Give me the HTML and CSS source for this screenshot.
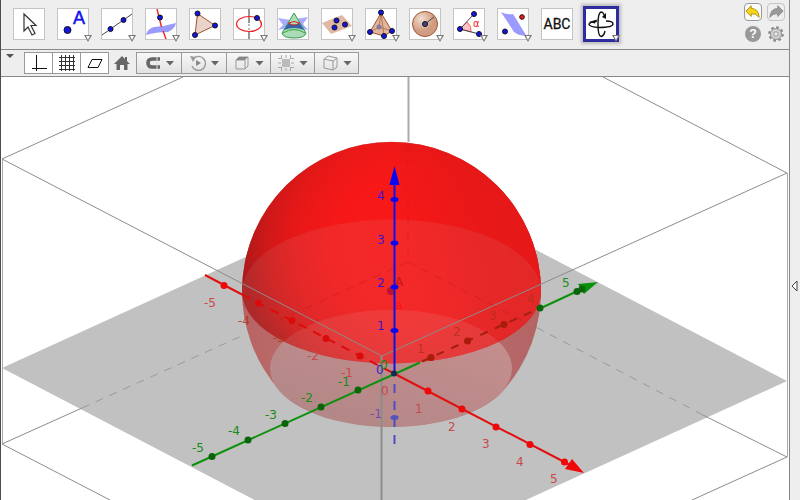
FILE: index.html
```html
<!DOCTYPE html>
<html lang="en">
<head>
<meta charset="utf-8">
<title>3D Graphics</title>
<link rel="stylesheet" href="styles.css">
</head>
<body>
<main class="app">
<header class="toolbar">
<div class="tools">
<button class="tool" aria-label="Move"><svg viewBox="0 0 30 30"><path d="M10 5v17l4-4 4 8 3-1.500-4-8h5z" fill="#fff" stroke="#333" stroke-width="1.200"/></svg></button>
<button class="tool more" aria-label="Point"><svg viewBox="0 0 30 30"><circle class="pt" cx="9.500" cy="21" r="3.500"/><text x="15" y="15" class="letter">A</text></svg></button>
<button class="tool more" aria-label="Line"><svg viewBox="0 0 30 30"><path d="M0 26L30 5" stroke="#444"/><circle class="pt" cx="8.500" cy="20" r="2.500"/><circle class="pt" cx="21.500" cy="11" r="2.500"/></svg></button>
<button class="tool more" aria-label="Perpendicular Line"><svg viewBox="0 0 30 30"><path d="M0 26Q1 20 8 18Q20 17 30 14Q29 20 22 23Q10 23 0 26z" fill="#9b9bff"/><path d="M11 0L15.500 18M17 22L20 30" stroke="#e22" stroke-width="1.400"/><circle class="pt" cx="14" cy="8.500" r="2.500"/></svg></button>
<button class="tool" aria-label="Polygon"><svg viewBox="0 0 30 30"><path d="M7.500 4.500L25 16.500L5 26z" fill="#ead3c9" stroke="#a0522d"/><circle class="pt" cx="7.500" cy="4.500" r="2.500"/><circle class="pt" cx="25" cy="16.500" r="2.500"/><circle class="pt" cx="5" cy="26" r="2.500"/></svg></button>
<button class="tool more" aria-label="Circle with Axis"><svg viewBox="0 0 30 30"><path d="M15 0V14M15 23V30" stroke="#777" stroke-width="1.500"/><path d="M15 15V22" stroke="#777" stroke-dasharray="2 2"/><ellipse cx="15" cy="15" rx="12.500" ry="7.500" fill="none" stroke="#e22" stroke-width="1.200"/><circle class="pt" cx="23" cy="9" r="2.500"/></svg></button>
<button class="tool" aria-label="Intersect Two Surfaces"><svg viewBox="0 0 30 30"><path d="M0 9L12 11L30 8L25 15L30 21L14 18L0 21L5 16z" fill="#a9a9ff"/><path d="M16 4L4 24Q5 29 16 29Q27 29 28 24z" fill="#acdcb5" stroke="#359a55"/><path d="M10.500 14Q16 18 21.500 14L26 21Q16 17 6 21z" fill="#3563a5"/><path d="M10.500 14Q16 18 21.500 14Q16 11 10.500 14" fill="none" stroke="#d22"/><path d="M5 24Q16 17 27 24" fill="none" stroke="#35a53e"/></svg></button>
<button class="tool more" aria-label="Plane through 3 Points"><svg viewBox="0 0 30 30"><path d="M0 14L20 6L30 17L9 25z" fill="#deb9a6"/><circle class="pt" cx="14.500" cy="11.500" r="2.500"/><circle class="pt" cx="23" cy="15.500" r="2.500"/><circle class="pt" cx="12.500" cy="18.500" r="2.500"/></svg></button>
<button class="tool more" aria-label="Pyramid"><svg viewBox="0 0 30 30"><path d="M15 4L4 23L18 27L26 22z" fill="#e0b49d" stroke="#a0522d"/><path d="M15 4L18 27M15 4L13 18L4 23M13 18L26 22" fill="none" stroke="#b77550"/><circle cx="13" cy="18" r="2.500" fill="#8179a0"/><circle class="pt" cx="15" cy="3.500" r="2.500"/><circle class="pt" cx="4" cy="23" r="2.500"/><circle class="pt" cx="18" cy="27" r="2.500"/><circle class="pt" cx="26" cy="22" r="2.500"/></svg></button>
<button class="tool more" aria-label="Sphere"><svg viewBox="0 0 30 30"><circle cx="15" cy="15" r="12.500" fill="url(#ball)" stroke="#9b5636"/><path d="M15 15L24 8" stroke="#444"/><circle cx="15" cy="15" r="2.500" fill="#454677" stroke="#112"/></svg></button>
<button class="tool more" aria-label="Angle"><svg viewBox="0 0 30 30"><path d="M6 20L13 13Q18 17 17 23z" fill="#ffc3c3" stroke="#e66"/><path d="M20 5L6 20L25 25" fill="none" stroke="#444"/><circle class="pt" cx="20" cy="5" r="2.500"/><circle class="pt" cx="6" cy="20" r="2.500"/><circle class="pt" cx="25" cy="25" r="2.500"/><text x="19" y="18" class="alpha">α</text></svg></button>
<button class="tool more" aria-label="Reflect about Plane"><svg viewBox="0 0 30 30"><path d="M3 3Q9 6 15 5L28 26Q23 28 16 23z" fill="#9b9bff"/><circle cx="24" cy="8" r="2.300" fill="#d22" stroke="#300"/><circle class="pt" cx="7" cy="22.500" r="2.500"/></svg></button>
<button class="tool" aria-label="Text"><svg viewBox="0 0 30 30"><text x="15" y="20" class="abc">ABC</text></svg></button>
<button class="tool more selected" aria-label="Rotate 3D Graphics View"><svg viewBox="0 0 30 30"><g fill="none" stroke="#111" stroke-width="1.400"><path d="M11 12Q3 13 3 15.500Q4 18 13 18.500Q27 18.500 27 15Q27 12 20 12"/><path d="M19 9Q18 3 15 3Q12 4 12 15Q12 27 15 27.500Q18 27 19 22"/></g><path d="M3 13L11 10.500L9 14.500zM16 8L20 4L20 10z" fill="#111"/></svg></button>
</div>
<div class="actions">
<button class="action round" aria-label="Undo"><svg viewBox="0 0 18 18"><path d="M1 8L7 2V5Q15 5 16 15Q12 10 7 11V14z" fill="#f5d51b" stroke="#ae8800"/></svg></button>
<button class="action round dim" aria-label="Redo"><svg viewBox="0 0 18 18"><path d="M17 8L11 2V5Q3 5 2 15Q6 10 11 11V14z" fill="#999" stroke="#888"/></svg></button>
<button class="action" aria-label="Help"><svg viewBox="0 0 18 18"><circle cx="9" cy="9" r="9" fill="#999"/><text x="9" y="14" class="help">?</text></svg></button>
<button class="action" aria-label="Settings"><svg viewBox="0 0 18 18"><circle cx="9" cy="9" r="7.500" fill="none" stroke="#888" stroke-width="2.500" stroke-dasharray="2.950 2.940"/><circle cx="9" cy="9" r="4.500" fill="none" stroke="#d0d0d0" stroke-width="3.500"/><circle cx="9" cy="9" r="6.200" fill="none" stroke="#888"/><circle cx="9" cy="9" r="2.500" fill="#eee" stroke="#888"/></svg></button>
</div>
</header>
<nav class="stylebar">
<button class="toggle" aria-label="Toggle style bar"><svg viewBox="0 0 10 6"><path d="M1 1H9L5 5z" fill="#555"/></svg></button>
<div class="group">
<button class="opt white" aria-label="Axes"><svg viewBox="0 0 18 18"><path d="M6.500 1V17M2 14.500H17" class="ink"/></svg></button>
<button class="opt white" aria-label="Grid"><svg viewBox="0 0 18 18"><path d="M3.500 1V17M7.500 1V17M11.500 1V17M15.500 1V17M1 3.500H17M1 7.500H17M1 11.500H17M1 15.500H17" stroke="#333"/></svg></button>
<button class="opt white" aria-label="Plane"><svg viewBox="0 0 18 18"><path d="M6 5.500H16L12 13.500H2z" class="ink"/></svg></button>
</div>
<button class="home" aria-label="Standard View"><svg viewBox="0 0 18 18"><path d="M9 2L1 10H3.500V16H7V11H11V16H14.500V10H17L14 7V3H12V5z" fill="#666"/></svg></button>
<div class="group">
<button class="opt drop" aria-label="Point Capturing"><svg viewBox="0 0 18 18"><path d="M16 5H8Q4 5 4 9T8 13H16" fill="none" stroke="#666" stroke-width="3.600"/><path d="M13 3V15" stroke="#ddd"/></svg></button>
<button class="opt drop" aria-label="Start rotating"><svg viewBox="0 0 18 18"><path d="M4 5A7 7 0 1 1 3 12" fill="none" stroke="#999" stroke-width="1.400"/><path d="M1 2L7 3L4 8z" fill="#999"/><path d="M7 6L12 9L7 12z" fill="#888"/></svg></button>
<button class="opt drop" aria-label="View direction"><svg viewBox="0 0 18 18"><path d="M3 6L6 3H15V12L12 15" class="cube"/><path d="M3 6H12V15H3z" class="cube"/><path d="M3 6L6 3H15L12 6z" fill="#888"/></svg></button>
<button class="opt drop" aria-label="Clipping"><svg viewBox="0 0 18 18"><path d="M5 5H13V13H5z" fill="#bbb"/><path d="M4.500 1V5M9 1V4M13.500 1V5M4.500 13V17M9 14V17M13.500 13V17M1 4.500H5M1 9H4M1 13.500H5M13 4.500H17M14 9H17M13 13.500H17" stroke="#aaa"/></svg></button>
<button class="opt drop" aria-label="Projection"><svg viewBox="0 0 18 18"><path d="M3 5L12 7V16L3 14zM3 5L7 2L16 4L12 7M16 4V13L12 16" class="cube"/></svg></button>
</div>
</nav>
<section class="view">
<svg viewBox="1 77 788 423" preserveAspectRatio="xMidYMin slice" role="img" aria-label="Sphere with coordinate axes">
<defs>
<radialGradient id="dome" gradientUnits="userSpaceOnUse" cx="415" cy="245" r="176">
<stop offset="0" stop-color="#fa1818"/><stop offset=".45" stop-color="#f61818"/><stop offset=".68" stop-color="#e81818"/><stop offset=".84" stop-color="#d01818"/><stop offset="1" stop-color="#a81a1a"/>
</radialGradient>
<linearGradient id="side" gradientUnits="userSpaceOnUse" x1="400" y1="250" x2="500" y2="215"><stop offset="0" stop-color="#e41818" stop-opacity="0"/><stop offset="1" stop-color="#e61818"/></linearGradient>
<linearGradient id="under"><stop offset="0" stop-color="#b96464"/><stop offset=".5" stop-color="#be7474"/><stop offset="1" stop-color="#b36464"/></linearGradient>
<linearGradient id="base" x1="0" y1="1" x2=".7" y2="0"><stop offset="0" stop-color="#b08686"/><stop offset="1" stop-color="#c68e8e"/></linearGradient>
<radialGradient id="ball" cx=".35" cy=".3"><stop offset="0" stop-color="#f2ddd1"/><stop offset="1" stop-color="#d09b80"/></radialGradient>
<clipPath id="domeclip"><path d="M242 291.500A149.500 149.500 0 0 1 541 291.500A149.500 72 0 0 1 242 291.500z"/></clipPath>
</defs>
<path d="M2 368L408 183L787 381L381 566z" fill="#c1c1c1"/>
<path d="M281 392A149.500 149.500 0 1 1 502 392A121 58.500 0 0 1 281 392z" fill="url(#under)"/>
<ellipse cx="391" cy="368.500" rx="121" ry="58.500" fill="url(#base)"/>
<g clip-path="url(#domeclip)">
<path d="M240 140H543V366H240z" fill="url(#dome)"/>
<path d="M400 140H543V366H400z" fill="url(#side)"/>
<ellipse cx="391.500" cy="291.500" rx="149.500" ry="72" fill="#cfcfcf" fill-opacity=".09"/>
<ellipse cx="391" cy="368.500" rx="121" ry="58.500" fill="#ddd" fill-opacity=".1"/>
<path d="M408 142V262L541 330M408 262L242 337" class="inner"/>
</g>
<path d="M82 408L246 334M703 415L530 324" class="edge hidden"/>
<path d="M2.500 159V444M787.500 173V457" class="edge pale"/>
<path d="M408.500 77V142" class="edge pale wide"/>
<path d="M183 77L2 159L382 356L787 173L603 77M82 408L2 444L110 500M703 415L787 457L692 500" class="edge"/>
<path d="M381.500 356V500" class="edge wide"/>
<g class="red">
<path d="M205 275L242 294.500M394 373.500L572 466"/>
<path d="M242 294.500L394 373.500" class="dash"/>
<path d="M584 473L565 469L572 459z" class="solid"/>
<g class="solid"><circle cx="224" cy="285.500" r="3.500"/><circle cx="428" cy="391" r="3.500"/><circle cx="462" cy="409" r="3.500"/><circle cx="496" cy="427" r="3.500"/><circle cx="530" cy="444.500" r="3.500"/><circle cx="564.500" cy="462" r="3.500"/></g>
<g class="behind"><circle cx="258.500" cy="303" r="3.500"/><circle cx="292" cy="320.500" r="3.500"/><circle cx="326" cy="338.500" r="3.500"/><circle cx="360" cy="356" r="3.500"/></g>
</g>
<g class="green">
<path d="M192 465.500L420 362.500M540 308.500L582 289"/>
<path d="M422 361.500L540 308" class="dash"/>
<path d="M598 282L578 284L584 294z" class="head"/>
<g class="solid"><circle cx="212" cy="456.500" r="3.500"/><circle cx="248" cy="440" r="3.500"/><circle cx="285" cy="423.500" r="3.500"/><circle cx="321" cy="407" r="3.500"/><circle cx="358" cy="390" r="3.500"/><circle cx="540" cy="308" r="3.500"/><circle cx="577" cy="291.500" r="3.500"/><circle cx="582" cy="289" r="3.500"/></g>
<g class="behind"><circle cx="431" cy="357.500" r="3.500"/><circle cx="467.500" cy="341" r="3.500"/><circle cx="504" cy="324.500" r="3.500"/></g>
</g>
<circle cx="391" cy="291" r="4" fill="#be1230"/>
<text x="395" y="286" class="num a">A</text>
<text x="395" y="309" class="num a low">a</text>
<g class="blue">
<path d="M394.500 180V373"/>
<path d="M394.500 384V444" class="dash"/>
<path d="M394.500 166L399.500 185H389.500z" class="solid"/>
<g class="solid"><ellipse cx="394.500" cy="199.500" rx="4" ry="2.500"/><ellipse cx="394.500" cy="243" rx="4" ry="2.500"/><ellipse cx="394.500" cy="287" rx="4" ry="2.500"/><ellipse cx="394.500" cy="330.500" rx="4" ry="2.500"/></g>
<ellipse cx="394.500" cy="417.500" rx="4" ry="2.500" fill="#5454bd"/>
</g>
<circle cx="394" cy="373.500" r="3" fill="#122c54"/>
<g class="num zlab"><text x="377" y="200">4</text><text x="377" y="244">3</text><text x="377" y="287">2</text><text x="377" y="330">1</text><text x="376" y="374">0</text><text x="370" y="418" opacity=".55">-1</text></g>
<g class="num xlab"><text x="204" y="307">-5</text><text x="307" y="360">-2</text><text x="341" y="377">-1</text><text x="381" y="395">0</text><text x="415" y="413">1</text><text x="448" y="431">2</text><text x="482" y="448">3</text><text x="516" y="466">4</text><text x="550" y="483">5</text></g>
<g class="num xlab faint"><text x="238" y="325">-4</text><text x="273" y="342">-3</text></g>
<g class="num ylab"><text x="192" y="452">-5</text><text x="228" y="435">-4</text><text x="265" y="419">-3</text><text x="301" y="402">-2</text><text x="338" y="386">-1</text><text x="380" y="369">0</text><text x="562" y="287">5</text></g>
<g class="num ylab faint"><text x="417" y="353">1</text><text x="453" y="336">2</text><text x="489" y="320">3</text><text x="527" y="303">4</text></g>
</svg>
</section>
</main>
<aside class="gutter"><button class="expand" aria-label="Show sidebar"><svg viewBox="0 0 8 12"><path d="M6 1V11L1 6z" fill="#fff" stroke="#444"/></svg></button></aside>
</body>
</html>
```
FILE: styles.css
```css
* { box-sizing: border-box; }
body {
  margin: 0;
  display: flex;
  height: 100vh;
  background: #eee;
  font-family: "Liberation Sans", sans-serif;
  overflow: hidden;
}
button {
  padding: 0;
  border: 0;
  border-radius: 0;
  background: none;
  display: grid;
  place-items: center;
}
svg { display: block; }
.app {
  flex: 1;
  min-width: 0;
  display: flex;
  flex-direction: column;
  border-left: 1px solid #55474c;
  border-right: 1px solid #888;
}
.toolbar {
  display: flex;
  justify-content: space-between;
  height: 50px;
  padding: 0 4px 0 12px;
  border-bottom: 1px solid #888;
}
.tools { display: flex; gap: 12px; padding-top: 8px; }
.tool {
  position: relative;
  width: 32px;
  height: 32px;
  border: 1px solid #c4c4c4;
  background: #fff;
}
.tool svg { width: 30px; height: 30px; }
.more::before, .more::after {
  content: "";
  position: absolute;
  right: -4px;
  bottom: -3px;
  width: 8px;
  height: 7px;
  background: #777;
  clip-path: polygon(0 0, 100% 0, 50% 100%);
}
.more::after {
  right: -2px;
  bottom: -1px;
  width: 4px;
  height: 4px;
  background: #fff;
}
.selected {
  outline: 2px solid #2d2da0;
  border: 1px solid #2d2da0;
  box-shadow: 0 0 3px 4px #bbb;
}
.pt { fill: #1414e0; stroke: #112; stroke-width: 1; }
.letter { font: 18px "Liberation Sans", sans-serif; fill: #11e; stroke: #11e; stroke-width: 0.500; }
.alpha { font: 10px "DejaVu Sans", sans-serif; fill: #e22; }
.abc { font: 14px Roboto, "Liberation Sans", sans-serif; text-anchor: middle; fill: #111; stroke: #111; stroke-width: 0.300; }
.actions {
  display: grid;
  grid-template-columns: 18px 18px;
  gap: 4px 5px;
  align-content: start;
  padding-top: 3px;
}
.action { width: 18px; height: 18px; }
.action svg { width: 16px; height: 16px; }
.round { border: 1px solid #999; border-radius: 4px; background: #fafafa; }
.dim { border-color: #c4c4c4; background: #eee; }
.help { font: bold 14px "Liberation Sans", sans-serif; fill: #fff; text-anchor: middle; }
.stylebar {
  display: flex;
  align-items: flex-start;
  height: 27px;
  padding: 2px 4px 0;
  border-bottom: 1px solid #888;
}
.toggle { width: 10px; height: 8px; margin-right: 9px; }
.toggle svg { width: 10px; height: 6px; }
.group { display: flex; }
.opt {
  width: 29px;
  height: 22px;
  margin-right: -1px;
  border: 1px solid #999;
  background: linear-gradient(#f8f8f8, #e2e2e2);
}
.opt svg { width: 18px; height: 18px; }
.white { background: #fff; }
.drop { width: 46px; display: flex; align-items: center; justify-content: center; gap: 4px; }
.group .drop:nth-child(n+3) { width: 45px; }
.drop::after {
  content: "";
  width: 9px;
  height: 5px;
  background: #666;
  clip-path: polygon(0 0, 100% 0, 50% 100%);
}
.ink { fill: none; stroke: #111; stroke-width: 1; }
.cube { fill: none; stroke: #999; }
.home { width: 28px; height: 22px; }
.home svg { width: 18px; height: 18px; }
.view { flex: 1; min-height: 0; background: #fff; }
.view svg { width: 100%; height: 100%; }
.gutter { width: 10px; display: grid; align-items: start; padding-top: 280px; }
.expand { width: 10px; height: 12px; }
.expand svg { width: 8px; height: 12px; }
.edge { fill: none; stroke: #8c8c8c; stroke-width: 1; }
.pale { stroke: #aaa; }
.wide { stroke-width: 2; }
.hidden { stroke: #999; stroke-dasharray: 8 7; }
.inner { fill: none; stroke: #c81a1a; stroke-opacity: 0.550; stroke-dasharray: 8 7; }
.red path { stroke: #e01010; stroke-width: 2; }
.red .dash { stroke: #dc0c0c; stroke-dasharray: 9 7; }
.red .solid { fill: #f00808; stroke: none; }
.red .behind { fill: #d90c0c; }
.green path { stroke: #0d910d; stroke-width: 2; }
.green .dash { stroke: #a02010; stroke-dasharray: 8 8; }
.green .head { fill: #0a930a; stroke: none; }
.green .solid { fill: #0a650a; }
.green .behind { fill: #a81c08; }
.blue path { stroke: #1010e8; stroke-width: 2; }
.blue .dash { stroke: #4c4cc4; stroke-dasharray: 9 8; }
.blue .solid { fill: #0808f0; stroke: none; }
.num { font: 12px "DejaVu Sans", sans-serif; }
.zlab { fill: #3c14d0; }
.xlab { fill: #c84848; }
.ylab { fill: #188c18; }
.xlab.faint, .ylab.faint { fill: #b03018; opacity: 0.800; }
.a { fill: #c01818; }
.low { fill: #ff1010; }
```
